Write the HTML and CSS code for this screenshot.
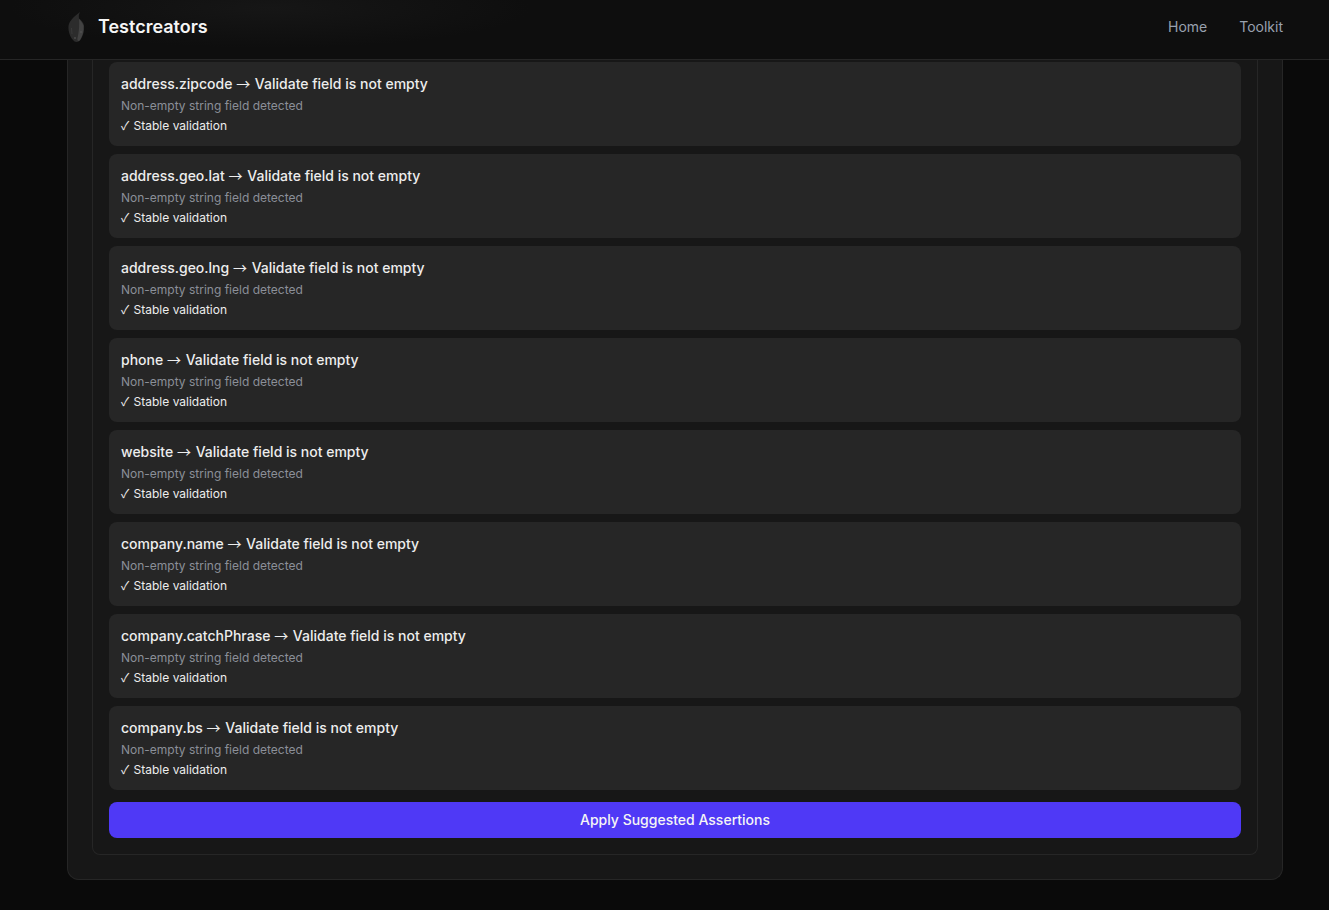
FILE: index.html
```html
<!DOCTYPE html>
<html lang="en">
<head>
    <meta charset="UTF-8">
    <meta name="viewport" content="width=device-width, initial-scale=1.0">
    <title>Testcreators</title>
    <link rel="stylesheet" href="styles.css">
</head>
<body>

    <header class="topbar">
        <div class="brand">
            <svg class="brand-logo" width="20" height="32" viewBox="0 0 20 32" aria-hidden="true">
                <path d="M13 1C12 3 11.500 5 12 7.500C14 9 16 11 17 14C17.500 19 16.500 24 14 28C12 31.500 8 32 6 29C3 26 1 20 1.500 15C2.500 9 8 5 13 1Z" fill="#2c2c2c"/>
                <path d="M12 8C14 10 16 12 16.500 15C17 20 15.500 25 13 29C11.500 31 10 30 10.500 27C12 21 12.500 14 12 8Z" fill="#424242"/>
                <path d="M4 17L5 17L5.500 23L4.500 23Z" fill="#3a3a3a"/>
                <circle cx="8" cy="27" r="1" fill="#4a4a4a"/>
                <circle cx="14" cy="21" r="0.800" fill="#5a5a5a"/>
            </svg>
            <span class="brand-name">Testcreators</span>
        </div>
        <nav class="nav">
            <a href="#">Home</a>
            <a href="#">Toolkit</a>
        </nav>
    </header>

    <main class="page">
        <section class="panel">
            <div class="inner-panel">
                <div class="card">
                    <div class="card-title">address.zipcode <span class="arrow">→</span> Validate field is not empty</div>
                    <div class="card-reason">Non-empty string field detected</div>
                    <div class="card-status"><span class="check">✓</span> Stable validation</div>
                </div>
                <div class="card">
                    <div class="card-title">address.geo.lat <span class="arrow">→</span> Validate field is not empty</div>
                    <div class="card-reason">Non-empty string field detected</div>
                    <div class="card-status"><span class="check">✓</span> Stable validation</div>
                </div>
                <div class="card">
                    <div class="card-title">address.geo.lng <span class="arrow">→</span> Validate field is not empty</div>
                    <div class="card-reason">Non-empty string field detected</div>
                    <div class="card-status"><span class="check">✓</span> Stable validation</div>
                </div>
                <div class="card">
                    <div class="card-title">phone <span class="arrow">→</span> Validate field is not empty</div>
                    <div class="card-reason">Non-empty string field detected</div>
                    <div class="card-status"><span class="check">✓</span> Stable validation</div>
                </div>
                <div class="card">
                    <div class="card-title">website <span class="arrow">→</span> Validate field is not empty</div>
                    <div class="card-reason">Non-empty string field detected</div>
                    <div class="card-status"><span class="check">✓</span> Stable validation</div>
                </div>
                <div class="card">
                    <div class="card-title">company.name <span class="arrow">→</span> Validate field is not empty</div>
                    <div class="card-reason">Non-empty string field detected</div>
                    <div class="card-status"><span class="check">✓</span> Stable validation</div>
                </div>
                <div class="card">
                    <div class="card-title">company.catchPhrase <span class="arrow">→</span> Validate field is not empty</div>
                    <div class="card-reason">Non-empty string field detected</div>
                    <div class="card-status"><span class="check">✓</span> Stable validation</div>
                </div>
                <div class="card">
                    <div class="card-title">company.bs <span class="arrow">→</span> Validate field is not empty</div>
                    <div class="card-reason">Non-empty string field detected</div>
                    <div class="card-status"><span class="check">✓</span> Stable validation</div>
                </div>
                <button class="apply-button">Apply Suggested Assertions</button>
            </div>
        </section>
    </main>

</body>
</html>
```

FILE: styles.css
```css
/* base */
body {
    margin: 0;
    height: 910px;
    overflow: hidden;
    background-color: #0a0a0a;
    color: #f5f5f5;
    font-family: Inter, "Liberation Sans", sans-serif;
}

/* top bar */
.topbar {
    display: flex;
    justify-content: space-between;
    align-items: center;
    height: 54px;
    padding: 0 46px 5px 67px;
    background-color: #0e0e0e;
    background-image: radial-gradient(ellipse 260px 40px at 270px 8px, #161616, transparent);
    border-bottom: 1px solid #262626;
}

.brand {
    display: flex;
    align-items: center;
    gap: 11px;
}

.brand-logo {
    display: block;
}

.brand-name {
    font-size: 18px;
    font-weight: 600;
    line-height: 28px;
    color: #f5f5f5;
}

.nav {
    display: flex;
    gap: 32px;
}

.nav a {
    font-size: 14px;
    line-height: 20px;
    color: #99a1af;
    text-decoration: none;
}

/* panels */
.page {
    padding: 0 46px 30px 67px;
}

.panel {
    padding: 0 24px 24px;
    background-color: #171717;
    border: 1px solid #262626;
    border-top: none;
    border-radius: 0 0 12px 12px;
}

.inner-panel {
    display: flex;
    flex-direction: column;
    gap: 8px;
    padding: 2px 16px 16px;
    border: 1px solid #262626;
    border-top: none;
    border-radius: 0 0 8px 8px;
}

/* suggestion cards */
.card {
    height: 84px;
    box-sizing: border-box;
    padding: 12px;
    background-color: #262626;
    border-radius: 8px;
}

.card-title {
    font-size: 14px;
    font-weight: 500;
    line-height: 20px;
    color: #ededed;
}

.arrow {
    margin-right: 1px;
    font-family: "Noto Sans CJK KR", sans-serif;
    font-weight: 400;
    line-height: 1;
}

.card-reason {
    margin-top: 4px;
    font-size: 12px;
    line-height: 16px;
    color: #8b8f98;
}

.card-status {
    margin-top: 4px;
    font-size: 12px;
    line-height: 16px;
    color: #ededed;
}

.check {
    margin-right: 1px;
    font-family: "Noto Sans CJK KR", sans-serif;
    line-height: 1;
}

.apply-button {
    height: 36px;
    margin-top: 4px;
    padding: 0 0 2px;
    background-color: #4f39f6;
    border: none;
    border-radius: 8px;
    color: #f5f5f5;
    font-family: inherit;
    font-size: 14px;
    font-weight: 500;
    cursor: pointer;
}
```
